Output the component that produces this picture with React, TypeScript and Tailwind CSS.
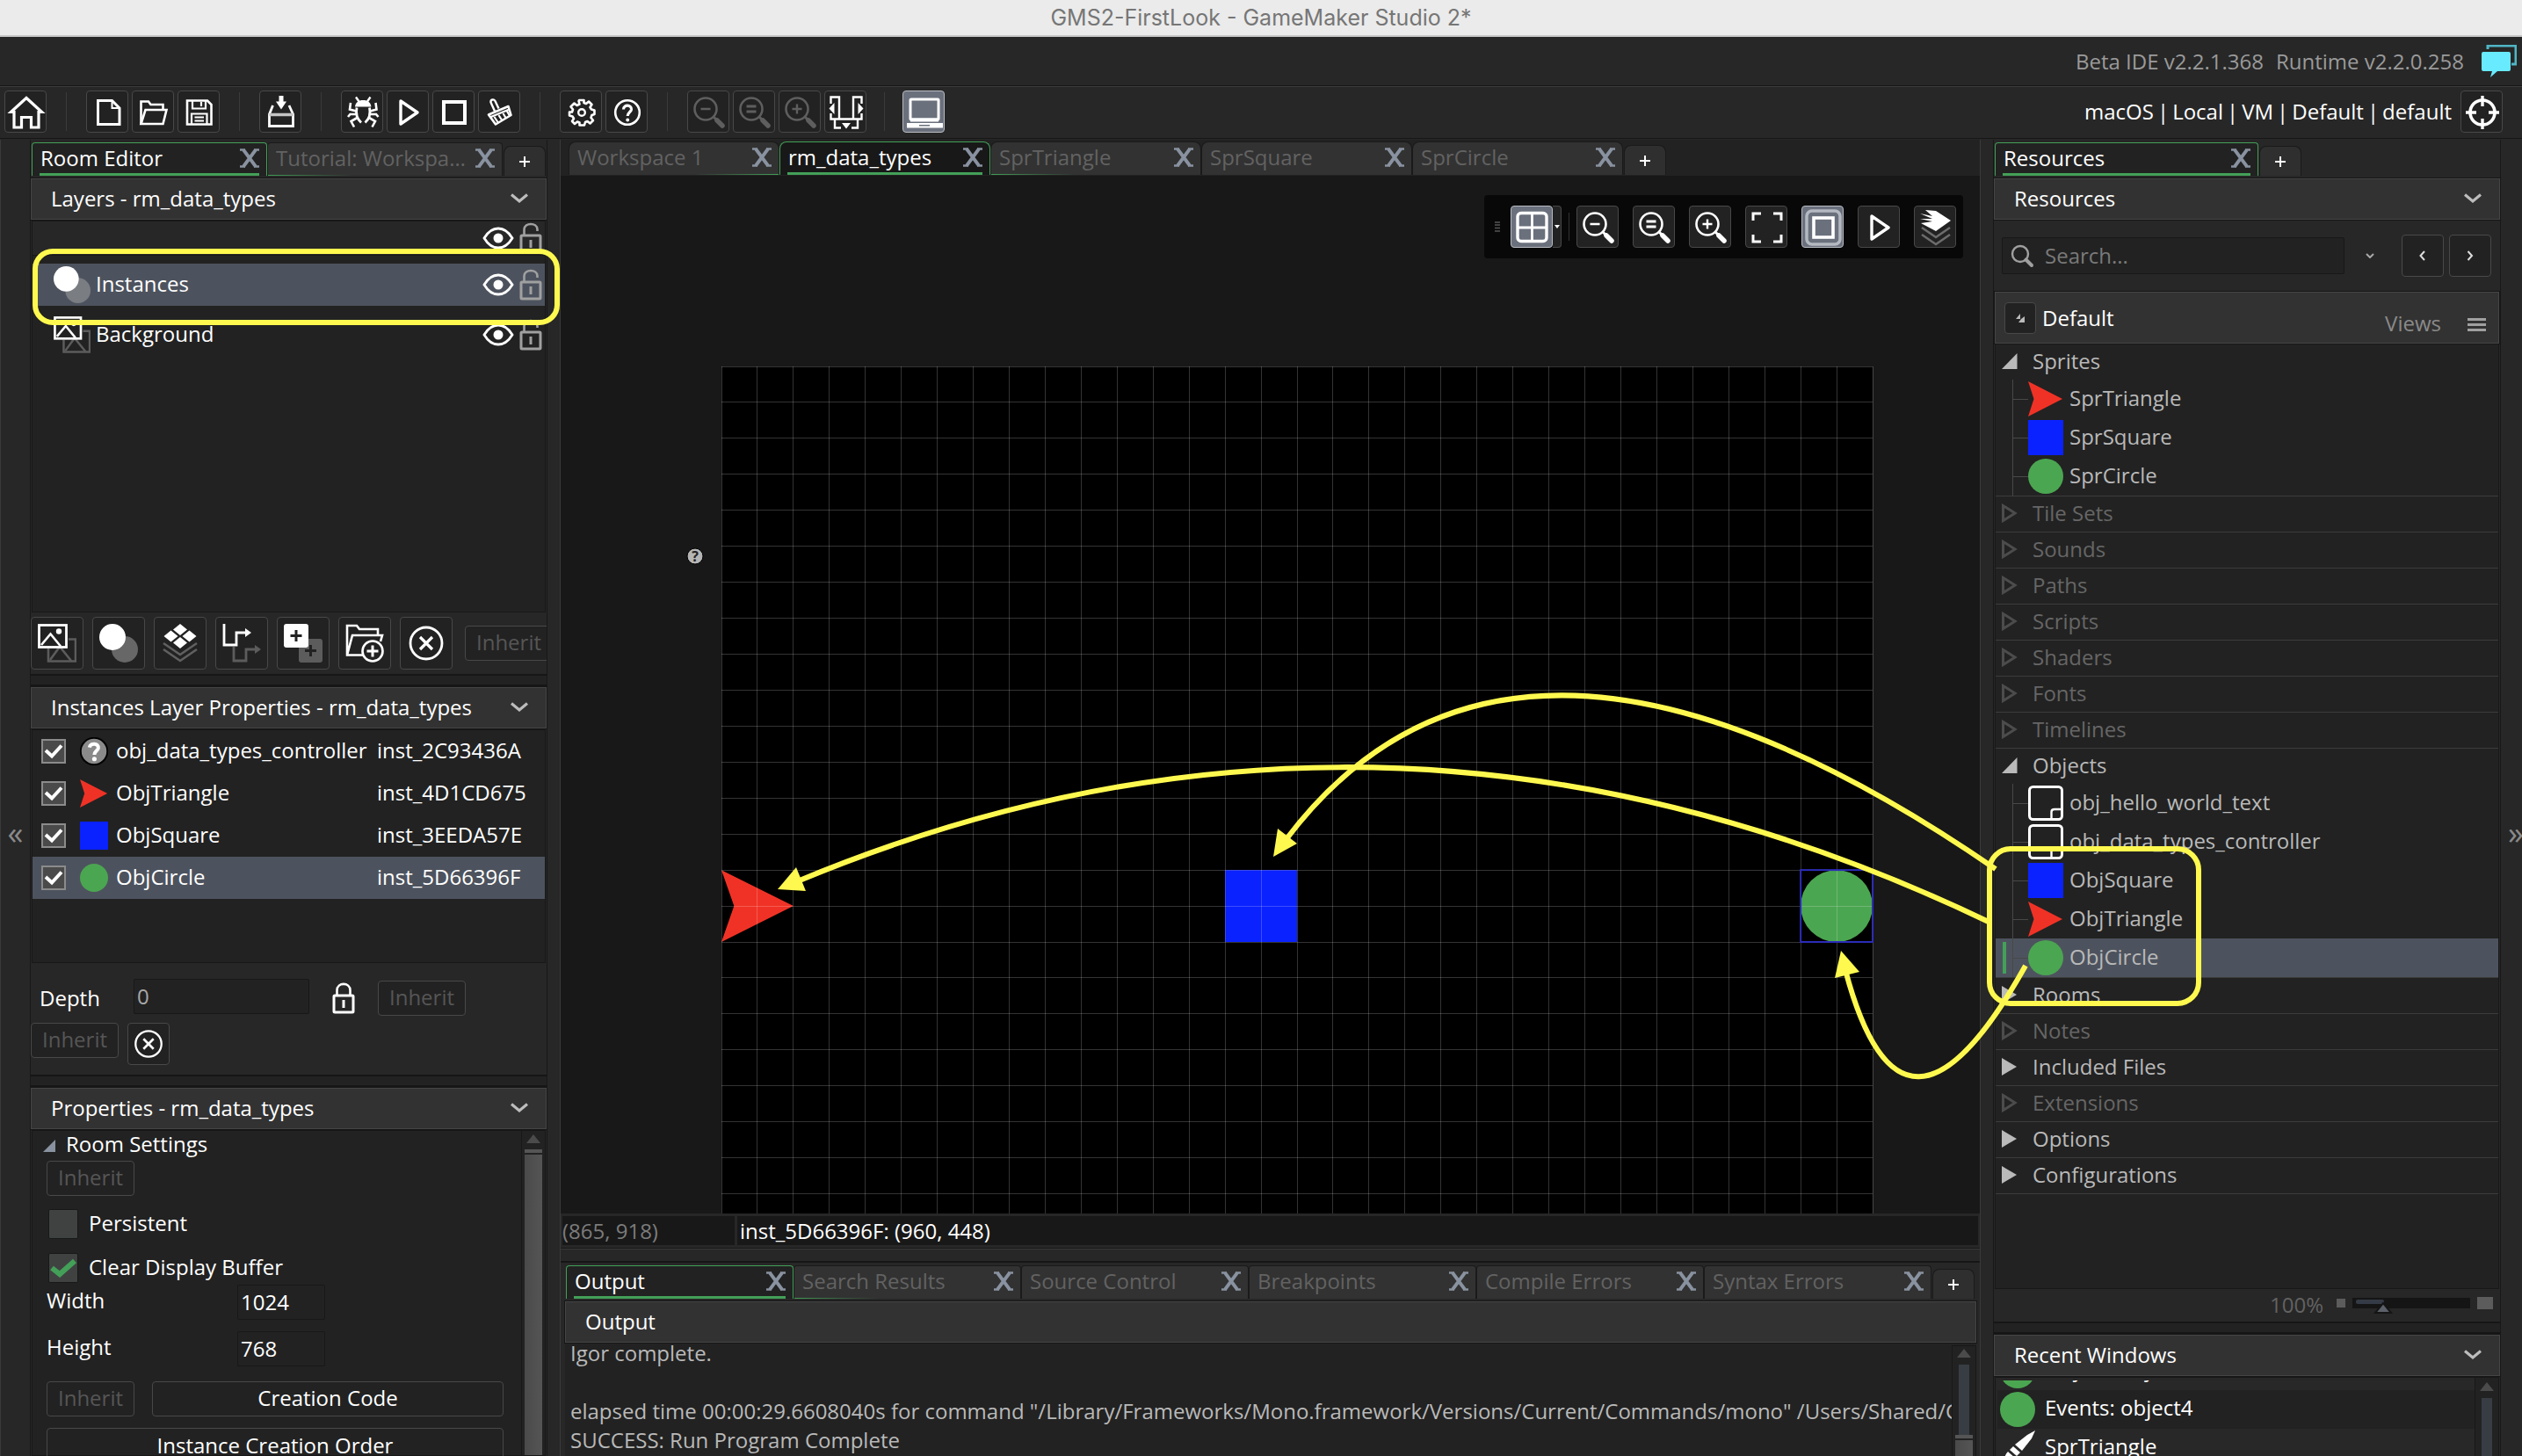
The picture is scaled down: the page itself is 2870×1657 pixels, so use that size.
import { useState } from "react";
import type { ReactNode } from "react";

const cx = (...c: (string | false | undefined)[]) => c.filter(Boolean).join(" ");

/* ---------- icons ---------- */

type SvgProps = { children: ReactNode; box?: number; className?: string };

function Svg({ children, box = 48, className = "size-12" }: SvgProps) {
  return (
    <svg
      viewBox={`0 0 ${box} ${box}`}
      className={cx("block shrink-0", className)}
      fill="none"
      stroke="currentColor"
      strokeWidth={3}
      aria-hidden="true"
    >
      {children}
    </svg>
  );
}

function Magnifier({ kind }: { kind: "out" | "reset" | "in" }) {
  return (
    <Svg>
      <circle cx="20" cy="20" r="12.5" strokeWidth="2.6" />
      <path d="M29 29l4 4" strokeWidth="3" />
      <path d="M33 33l6 6" strokeWidth="5.5" strokeLinecap="round" />
      {kind === "out" && <path d="M14.5 20h11" strokeWidth="2.6" />}
      {kind === "in" && <path d="M14.5 20h11M20 14.5v11" strokeWidth="2.4" />}
      {kind === "reset" && <path d="M14.5 17h11M14.5 23h11" strokeWidth="3" />}
    </Svg>
  );
}

const HomeIcon = () => (
  <Svg>
    <path d="M24 7.5L6.5 23.5H10V41H18.5V29.5H29.5V41H38V23.5H41.5Z" strokeWidth="3.2" />
  </Svg>
);
const NewIcon = () => (
  <Svg>
    <path d="M12.5 10.5H28.5L37 19V37.5H12.5Z" />
    <path d="M28.5 10.5V19H37" strokeWidth="2" />
  </Svg>
);
const OpenIcon = () => (
  <Svg>
    <path d="M9.5 37V11.5H18L20.5 15H34.5V20.5" strokeWidth="2.6" />
    <path d="M9.5 37L14.5 21H38.5L34.5 37Z" strokeWidth="2.6" />
  </Svg>
);
const SaveIcon = () => (
  <Svg>
    <path d="M10 10.5H33L37.5 15V37.5H10Z" strokeWidth="2.6" />
    <path d="M16 10.5V19.5H31V10.5M26 12V17M15 37V25.5H32.5V37M18.5 29.5H29M18.500 33.5H29" strokeWidth="2.2" />
  </Svg>
);
const BuildIcon = () => (
  <Svg>
    <path d="M14.5 16L10.500 26V39.5H37.5V26L33 16" strokeWidth="2.8" />
    <path d="M10.5 26.500H37.5" stroke="#c4c4c4" strokeWidth="3.5" />
    <path d="M24 5V14" strokeWidth="5" />
    <path d="M18 11.5H30L24 20.5Z" fill="currentColor" stroke="none" />
  </Svg>
);
const BugIcon = () => (
  <Svg>
    <path d="M15 17.5C15.500 12.500 19 10 24.200 10S33 12.500 33.400 17.5Z" fill="currentColor" stroke="none" />
    <path d="M19.500 11.500L16 6.500M29 11.500L32.500 6.500" strokeWidth="2.4" />
    <path d="M17 18.500C15.500 26 17 31 22 35.500M31.500 18.500C33 26 31.500 31 26.500 35.500" strokeWidth="2.8" />
    <path
      d="M10 13L9 20.500L16.500 22.500M38.500 13L39.500 20.500L32 22.500M16 26H9.500L7 29M32.500 26H39L41.500 29M17.500 30L10.500 34L14 40.500M31 30L38 34L34.500 40.500"
      strokeWidth="2.6"
    />
  </Svg>
);
const PlayIcon = () => (
  <Svg>
    <path d="M15 11L34 24L15 37Z" strokeWidth="3.4" strokeLinejoin="round" />
  </Svg>
);
const StopIcon = () => (
  <Svg>
    <rect x="12" y="12" width="24" height="24" strokeWidth="4" />
  </Svg>
);
const BroomIcon = () => (
  <Svg>
    <path d="M18 22.500L13.500 12.500C13 9 17 8.500 18.500 11L22.500 19.500" strokeWidth="2.4" />
    <path d="M11 26.500L33.500 17L36.500 27L19 37.500Z" strokeWidth="2.6" strokeLinejoin="round" />
    <path d="M12.500 29.500L34.500 20.500M17.500 29L21.500 35M22.500 27L26 32.500M27.500 25L30.500 30M32 22.500L34.500 27" strokeWidth="2.2" />
  </Svg>
);
const GearIcon = () => (
  <Svg>
    <path
      d="M20.5 11L21.5 14.5L18.5 16L15.5 13.5L11.5 17.5L14 20.5L13 23.5H10V27.5L13.5 28.5L15 31L13 34L16 37L19 34.5L21.5 35.5V38.5H27L28 35L30.5 34L33.5 36.5L37 33L34.5 30L35.5 27L38.5 26V21.5L35 20.5L33.5 18L35.5 15L32 11.5L29 14L26.5 13V10H21Z"
      strokeWidth="2.6"
      strokeLinejoin="round"
    />
    <circle cx="24" cy="24" r="3.8" strokeWidth="2.4" />
  </Svg>
);
const HelpIcon = () => (
  <Svg>
    <circle cx="24" cy="24" r="13.8" strokeWidth="2.6" />
    <path d="M19.5 20.5C19.5 14.5 29 15 28.5 20.5C28 23.5 24.2 24 24.2 28" strokeWidth="3.2" />
    <circle cx="24.2" cy="32.5" r="1.9" fill="currentColor" stroke="none" />
  </Svg>
);
const DockIcon = () => (
  <Svg>
    <path d="M16 31V6.5H6.5V14M6.5 25V31.500H41.5V25M41.5 14V6.5H32V31M11 32V41.500H18M37 32V41.500H30" strokeWidth="2.4" />
    <path d="M10.500 13L4.500 19.500L10.500 26ZM37.500 13L43.500 19.500L37.500 26ZM19 36H29L24 42.500Z" fill="currentColor" stroke="none" />
  </Svg>
);
const LaptopIcon = () => (
  <Svg>
    <rect x="8" y="9" width="32" height="23" rx="1" strokeWidth="3" />
    <path d="M8 32.5H40" strokeWidth="4" />
    <rect x="4" y="36" width="41" height="5.5" fill="currentColor" stroke="none" />
    <path d="M18 38.8H30" stroke="#6a707c" strokeWidth="1.6" />
  </Svg>
);
const TargetIcon = () => (
  <Svg>
    <circle cx="24" cy="24" r="14" strokeWidth="3.6" />
    <path d="M24 5V17M24 31V43M5 24H17M31 24H43" strokeWidth="3.4" />
  </Svg>
);
const GridIcon = () => (
  <Svg>
    <rect x="7" y="7.5" width="33" height="32" rx="4" strokeWidth="3.4" />
    <path d="M23.5 8V39M7 24H40" strokeWidth="2.8" />
  </Svg>
);
const FitIcon = () => (
  <Svg>
    <path d="M17 8H8V16M31 8H40V16M17 40H8V32M31 40H40V32" strokeWidth="3" />
  </Svg>
);
const FrameIcon = () => (
  <Svg>
    <rect x="5" y="5" width="38" height="38" rx="6" stroke="#b4b8c0" strokeWidth="3.5" />
    <rect x="13" y="13" width="22" height="22" strokeWidth="3.6" />
  </Svg>
);
const LayersIcon = () => (
  <Svg>
    <path d="M8 24L24 35L40 24M8 32L24 43L40 32" stroke="#6c6c6c" strokeWidth="2.6" />
    <path d="M24 5L41 16L24 28L7 19L20 17L6 14L20 14L6 8L20 11L12 4Z" fill="currentColor" stroke="none" />
  </Svg>
);

/* layer type icons on a 44 unit box */
const BackgroundLayer = ({ className = "size-11" }: { className?: string }) => (
  <Svg box={44} className={className}>
    <g stroke="#5c5c5c" strokeWidth="2.6">
      <path d="M12 28V42.5H43V17.5H35" />
      <path d="M14 41L25 26L38 42" />
    </g>
    <rect x="1.5" y="1.5" width="31" height="25" fill="#222" strokeWidth="2.8" />
    <path d="M4 24L14.5 11.5L26 25.5" strokeWidth="2.6" />
    <circle cx="24" cy="8.5" r="3.2" fill="currentColor" stroke="none" />
  </Svg>
);
const InstanceLayer = ({ className = "size-11" }: { className?: string }) => (
  <Svg box={44} className={className}>
    <circle cx="29" cy="29" r="15" fill="#a0a0a0" fillOpacity="0.55" stroke="none" />
    <circle cx="15" cy="15" r="15" fill="currentColor" stroke="none" />
  </Svg>
);
const TileLayer = () => (
  <Svg box={44} className="size-11">
    <path d="M3 22L22 35L41 22M3 29L22 42L41 29" stroke="#606060" strokeWidth="2.6" />
    <path d="M22 0l8 6.5-8 6.5-8-6.5zM11.5 7.5l8 6.5-8 6.5-8-6.5zM32.5 7.5l8 6.5-8 6.5-8-6.5zM22 15l8 6.5-8 6.5-8-6.5z" fill="currentColor" stroke="none" />
  </Svg>
);
const PathLayer = () => (
  <Svg box={44} className="size-11">
    <path d="M13 26V42H27V29H38" stroke="#5c5c5c" strokeWidth="2.8" />
    <path d="M37 24L44 29L37 34Z" fill="#5c5c5c" stroke="none" />
    <path d="M2 0V24H16V10H27" strokeWidth="2.8" />
    <path d="M26 5L33 10L26 15Z" fill="currentColor" stroke="none" />
  </Svg>
);
const AssetLayer = () => (
  <Svg box={44} className="size-11">
    <rect x="17" y="17" width="27" height="27" rx="3" fill="#5c5c5c" stroke="none" />
    <path d="M30.5 24V37M24 30.5H37" stroke="#222" />
    <rect x="0" y="0" width="28" height="27" rx="3" fill="currentColor" stroke="none" />
    <path d="M14 7V20M7.5 13.5H20.5" stroke="#222" />
  </Svg>
);
const FolderAdd = () => (
  <Svg box={44} className="size-11">
    <path d="M24 35.5H2V2H13L16 6H37V12M2 35.5L8 13H42L40 20" strokeWidth="2.6" />
    <circle cx="31" cy="31" r="11.5" fill="#222" strokeWidth="2.6" />
    <path d="M31 24.5V37.5M24.5 31H37.5" strokeWidth="3" />
  </Svg>
);
const CircleX = ({ className = "size-11" }: { className?: string }) => (
  <Svg box={44} className={className}>
    <circle cx="22" cy="22" r="18" strokeWidth="2.8" />
    <path d="M15 15L29 29M29 15L15 29" strokeWidth="3.2" />
  </Svg>
);

function Eye() {
  return (
    <svg viewBox="0 0 36 26" className="h-[26px] w-9 shrink-0" fill="none" aria-hidden="true">
      <path d="M2 13C8 3 14 2 18 2S28 3 34 13C28 23 22 24 18 24S8 23 2 13Z" stroke="#fff" strokeWidth="2.8" />
      <circle cx="18" cy="13" r="5.5" fill="#fff" />
    </svg>
  );
}
function Lock({ open, className }: { open?: boolean; className: string }) {
  return (
    <svg viewBox="0 0 26 36" className={cx("h-9 w-[26px] shrink-0", className)} fill="none" stroke="currentColor" aria-hidden="true">
      <rect x="2" y="15" width="22" height="19" rx="1" strokeWidth="3" />
      <path d={open ? "M5.5 15V8C5.5 0 20.5 0 20.5 8V10" : "M5.5 15V9C5.5 -0.5 20.5 -0.5 20.5 9V15"} strokeWidth="2.6" />
      <path d="M13 20V29" strokeWidth="3" />
    </svg>
  );
}
const Chevron = () => (
  <svg viewBox="0 0 20 12" className="h-3 w-5 shrink-0" fill="none" stroke="#bdbdbd" strokeWidth="3.2" aria-hidden="true">
    <path d="M1 1.5L10 9L19 1.5" />
  </svg>
);
const CloseGlyph = () => (
  <svg viewBox="0 0 24 22" className="h-[22px] w-6" fill="none" stroke="#8992a0" aria-hidden="true">
    <path d="M5 1.5L19 20.5M19 1.5L5 20.5" strokeWidth="3.8" />
    <path d="M1 1.5H7M17 1.5H23M1 20.5H7M17 20.5H23" strokeWidth="2.6" />
  </svg>
);

type ShapeName = "triangle" | "square" | "circle" | "object" | "help" | "brush";
function Shape({ name, className = "size-10" }: { name: ShapeName; className?: string }) {
  return (
    <svg viewBox="0 0 40 40" className={cx("block shrink-0", className)} aria-hidden="true">
      {name === "triangle" && <path d="M0 0L39 20L0 40L6.5 20Z" fill="#f03226" />}
      {name === "square" && <rect width="40" height="40" fill="#0a22ff" />}
      {name === "circle" && <circle cx="20" cy="20" r="20" fill="#4ba651" />}
      {name === "object" && (
        <g fill="none" stroke="#fff" strokeWidth="3">
          <rect x="1.5" y="1.5" width="37" height="37" rx="4" />
          <path d="M26.5 38V30C26.5 28 28 27 30 27H38" strokeWidth="2.4" />
        </g>
      )}
      {name === "help" && (
        <g>
          <circle cx="20" cy="20" r="19" fill="#8a8a8a" stroke="#000" strokeWidth="2.4" />
          <path d="M13.5 14.5C14.5 7.5 27 8 26 15.5C25.5 19 20.5 19.5 20.5 25" fill="none" stroke="#fff" strokeWidth="5" />
          <circle cx="20.5" cy="31" r="3.2" fill="#fff" />
        </g>
      )}
      {name === "brush" && (
        <g fill="#fff">
          <path d="M40 0L36 9L25 23L17 16L31 5Z" />
          <path d="M15 18L23 25L19 29L11 22Z" />
          <path d="M9 24L17 31C14 37 8 39 0 38C5 34 5 28 9 24Z" />
        </g>
      )}
    </svg>
  );
}

/* ---------- building blocks ---------- */

type IconButtonProps = { label: string; active?: boolean; dim?: boolean; children: ReactNode };
function IconButton({ label, active, dim, children }: IconButtonProps) {
  return (
    <button
      aria-label={label}
      className={cx(
        "grid size-12 shrink-0 place-items-center overflow-hidden rounded-sm border",
        active ? "border-[#b9bcc2] bg-[#6a707c]" : "border-[#484848] bg-[#222]",
        dim ? "text-[#5e5e5e]" : "text-white",
      )}
    >
      {children}
    </button>
  );
}

const Separator = () => <span className="mx-[22px] h-11 w-px shrink-0 bg-[#3a3a3a]" />;

type TabBarProps = {
  tabs: string[];
  active: string;
  label: string;
  tabClass: string;
  round?: string;
  activeBg: string;
};
function TabBar({ tabs, active, label, tabClass, round = "rounded-t", activeBg }: TabBarProps) {
  const at = tabs.indexOf(active);
  return (
    <div role="tablist" aria-label={label} className="flex items-end">
      {tabs.map((t, i) => {
        const on = i === at;
        return (
          <div
            key={t}
            className={cx(
              "relative flex h-[38px] shrink-0 items-center border-x border-t pr-[7px] pb-[3px] pl-[9px]",
              tabClass,
              round,
              on ? "border-[#43a058] text-white" : "border-[#1a1a1a] bg-[#323232] text-[#626262]",
              on && activeBg,
            )}
          >
            <button role="tab" aria-selected={on} className="min-w-0 flex-1 truncate text-left">
              {t}
            </button>
            <button aria-label={`Close ${t}`}>
              <CloseGlyph />
            </button>
            {on && <span className="absolute inset-x-2 bottom-0 h-[3px] bg-[#43a058]" />}
            {i === at + 1 && <span className="absolute bottom-0 left-0 h-px w-24 bg-linear-to-r from-[#43a058] to-transparent" />}
            {i === at - 1 && <span className="absolute right-0 bottom-0 h-px w-24 bg-linear-to-l from-[#43a058] to-transparent" />}
          </div>
        );
      })}
      <button
        aria-label={`Add tab to ${label}`}
        className="ml-px grid h-[34px] w-12 place-items-center rounded-t-lg border border-b-0 border-[#1a1a1a] bg-[#2f2f2f] text-white"
      >
        <svg viewBox="0 0 14 14" className="size-3.5" stroke="currentColor" strokeWidth="2" aria-hidden="true">
          <path d="M7 1V13M1 7H13" />
        </svg>
      </button>
    </div>
  );
}

function PanelHeader({ title, collapsible = true }: { title: string; collapsible?: boolean }) {
  return (
    <div className="mb-px flex h-[47px] shrink-0 items-center justify-between border border-[#454545] bg-[#323232] pr-5 pb-0.5 pl-[22px] text-white outline-1 outline-[#161616]">
      <h2>{title}</h2>
      {collapsible && (
        <button aria-label={`Collapse ${title}`}>
          <Chevron />
        </button>
      )}
    </div>
  );
}

const Splitter = () => <div className="mb-px h-3.5 shrink-0 border-y-2 border-[#161616] bg-[#222]" />;

function Inherit({ className }: { className?: string }) {
  return (
    <button disabled className={cx("h-10 w-[100px] shrink-0 rounded-sm border border-[#484848] bg-[#222] pb-0.5 text-[#565656]", className)}>
      Inherit
    </button>
  );
}

function ScrollArrow() {
  return (
    <svg viewBox="0 0 16 10" className="h-2.5 w-4 shrink-0" fill="#4b4b4b" aria-hidden="true">
      <path d="M8 0L16 10H0Z" />
    </svg>
  );
}

/* ---------- left column ---------- */

const layers = [
  { name: "", icon: null, selected: false },
  { name: "Instances", icon: <InstanceLayer className="size-[42px]" />, selected: true },
  { name: "Background", icon: <BackgroundLayer className="size-[42px]" />, selected: false },
];

const instances: { name: string; id: string; shape: ShapeName; selected?: boolean }[] = [
  { name: "obj_data_types_controller", id: "inst_2C93436A", shape: "help" },
  { name: "ObjTriangle", id: "inst_4D1CD675", shape: "triangle" },
  { name: "ObjSquare", id: "inst_3EEDA57E", shape: "square" },
  { name: "ObjCircle", id: "inst_5D66396F", shape: "circle", selected: true },
];

const layerButtons: { label: string; icon: ReactNode }[] = [
  { label: "New background layer", icon: <BackgroundLayer /> },
  { label: "New instance layer", icon: <InstanceLayer /> },
  { label: "New tile layer", icon: <TileLayer /> },
  { label: "New path layer", icon: <PathLayer /> },
  { label: "New asset layer", icon: <AssetLayer /> },
  { label: "New layer folder", icon: <FolderAdd /> },
  { label: "Delete layer", icon: <CircleX /> },
];

function SettingCheck({ label, initial }: { label: string; initial: boolean }) {
  const [on, setOn] = useState(initial);
  return (
    <label className="flex h-[50px] items-center gap-3">
      <span className="ml-0.5 grid size-[34px] place-items-center">
        <input
          type="checkbox"
          checked={on}
          onChange={() => setOn(!on)}
          className="col-start-1 row-start-1 size-[34px] appearance-none rounded-xs border border-[#181818] bg-[#404242]"
        />
        {on && (
          <svg viewBox="0 0 30 22" className="pointer-events-none col-start-1 row-start-1 h-[22px] w-[30px]" fill="none" stroke="#43a058" strokeWidth="6" aria-hidden="true">
            <path d="M2 11L11 18L28 3" />
          </svg>
        )}
      </span>
      <span className="pb-0.5">{label}</span>
    </label>
  );
}

function RoomEditor() {
  return (
    <aside className="flex w-[589px] shrink-0 flex-col overflow-hidden border-x border-[#181818] bg-[#272727] pt-[3px] text-white">
      <div className="mb-[3px] shrink-0 pl-px">
        <TabBar tabs={["Room Editor", "Tutorial: Workspaces"]} active="Room Editor" label="Room Editor" tabClass="w-[268px]" activeBg="bg-[#222]" />
      </div>
      <PanelHeader title="Layers - rm_data_types" />
      <ul className="mx-px flex h-[446px] shrink-0 flex-col gap-[9px] border border-[#181818] bg-[#222]">
        {layers.map((l) => (
          <li
            key={l.name}
            className={cx(
              "flex shrink-0 items-center gap-1.5 pr-[3px] pl-6",
              l.name === "" ? "h-[39px] border-b border-[#181818] bg-[#272727]" : "h-12",
              l.selected && "bg-[#4d535e]",
            )}
          >
            {l.icon}
            <span className="flex-1 pb-0.5">{l.name}</span>
            <button aria-label={`Toggle visibility ${l.name}`}>
              <Eye />
            </button>
            <button aria-label={`Toggle lock ${l.name}`}>
              <Lock open className="text-[#a0a0a0]" />
            </button>
          </li>
        ))}
      </ul>
      <div className="flex h-[70px] shrink-0 items-center gap-2.5 overflow-hidden">
        {layerButtons.map((b) => (
          <button key={b.label} aria-label={b.label} className="grid size-[60px] shrink-0 place-items-center rounded-sm border border-[#484848] bg-[#222] text-white">
            {b.icon}
          </button>
        ))}
        <Inherit className="ml-1" />
      </div>
      <Splitter />
      <PanelHeader title="Instances Layer Properties - rm_data_types" />
      <ul className="mx-px h-[266px] shrink-0 border border-[#181818] bg-[#222]">
        {instances.map((n) => (
          <li key={n.id} className={cx("grid h-12 grid-cols-[44px_41px_297px_1fr] items-center pl-2.5", n.selected && "bg-[#4d535e]")}>
            <span className="grid size-7 place-items-center">
              <input
                type="checkbox"
                defaultChecked
                aria-label={n.name}
                className="peer col-start-1 row-start-1 size-7 appearance-none border-2 border-[#8b8b8b] bg-[#4a4a4a]"
              />
              <svg viewBox="0 0 22 18" className="pointer-events-none col-start-1 row-start-1 hidden h-[18px] w-[22px] peer-checked:block" fill="none" stroke="#fff" strokeWidth="4" aria-hidden="true">
                <path d="M2 8L9 14.5L20 2.5" />
              </svg>
            </span>
            <Shape name={n.shape} className="size-8" />
            <span className="pb-0.5">{n.name}</span>
            <span className="pb-0.5">{n.id}</span>
          </li>
        ))}
      </ul>
      <div className="flex h-[68px] shrink-0 items-center pt-3 pl-2.5">
        <label htmlFor="depth" className="w-[107px]">
          Depth
        </label>
        <input id="depth" defaultValue="0" className="mb-1 h-10 w-[200px] rounded-xs border border-[#181818] bg-[#222] px-[3px] pb-0.5 text-[#a8a8a8]" />
        <button aria-label="Lock depth" className="ml-[26px]">
          <Lock className="text-white" />
        </button>
        <Inherit className="ml-[26px]" />
      </div>
      <div className="mb-[11px] flex h-12 shrink-0 items-start gap-2.5">
        <Inherit />
        <IconButton label="Clear">
          <CircleX className="size-9" />
        </IconButton>
      </div>
      <Splitter />
      <PanelHeader title="Properties - rm_data_types" />
      <div className="mx-px flex min-h-0 flex-1 border border-[#181818] bg-[#222]">
        <div className="flex min-w-0 flex-1 flex-col pr-5 pl-4">
          <h3 className="flex h-[34px] shrink-0 items-center gap-3 pb-1">
            <svg viewBox="0 0 14 14" className="mt-1 -ml-1 size-3.5" fill="#8992a0" aria-hidden="true">
              <path d="M14 0V14H0Z" />
            </svg>
            Room Settings
          </h3>
          <Inherit />
          <div className="mt-[7px] shrink-0">
            <SettingCheck label="Persistent" initial={false} />
            <SettingCheck label="Clear Display Buffer" initial />
          </div>
          <div className="-mt-1.5 mb-[17px] flex shrink-0 flex-col gap-[13px]">
            {[
              ["Width", "1024"],
              ["Height", "768"],
            ].map(([k, v]) => (
              <div key={k} className="flex h-10 items-center">
                <label htmlFor={k} className="w-[217px] pb-1">
                  {k}
                </label>
                <input id={k} defaultValue={v} className="h-10 w-[100px] rounded-xs border border-[#181818] bg-[#222] px-[3px] pb-0.5" />
              </div>
            ))}
          </div>
          <div className="flex shrink-0 gap-5">
            <Inherit />
            <button className="h-10 flex-1 rounded-sm border border-[#484848] pb-0.5">Creation Code</button>
          </div>
          <button className="mt-[13px] h-10 shrink-0 rounded-sm border border-[#484848]">Instance Creation Order</button>
        </div>
        <div className="flex w-[27px] flex-col items-center gap-[7px] border-l border-[#181818] pt-1">
          <ScrollArrow />
          <span className="flex w-5 flex-1 flex-col gap-0.5">
            <span className="h-1 bg-[#555]" />
            <span className="flex-1 bg-linear-to-r from-[#4a4a4a] to-[#555]" />
          </span>
        </div>
      </div>
    </aside>
  );
}

/* ---------- centre column ---------- */

const CELL = 41;

function RoomCanvas() {
  const left = 183;
  const top = 217;
  const width = CELL * 32 - 2;
  const step = width / 32;
  return (
    <svg className="block size-full" aria-label="Room view">
      <rect x={left} y={top} width={width} height="1000" fill="#000" />
      <svg x={left} y={top + step * 14} width={step * 2} height={step * 2} viewBox="0 0 40 40" preserveAspectRatio="none">
        <path d="M0 0L40 20L0 40L7 20Z" fill="#f03226" />
      </svg>
      <rect x={left + step * 14} y={top + step * 14} width={step * 2} height={step * 2} fill="#0a22ff" />
      <circle cx={left + step * 31} cy={top + step * 15} r={step} fill="#4ba651" />
      <g stroke="#fff" strokeOpacity="0.2" strokeWidth="1" shapeRendering="crispEdges">
        {Array.from({ length: 33 }, (_, i) => (
          <line key={`v${i}`} x1={left + i * step} x2={left + i * step} y1={top} y2="1200" />
        ))}
        {Array.from({ length: 24 }, (_, i) => (
          <line key={`h${i}`} x1={left} x2={left + width} y1={top + i * step} y2={top + i * step} />
        ))}
      </g>
      <rect x={left + step * 30} y={top + step * 14} width={step * 2} height={step * 2} fill="none" stroke="#2c2cb8" strokeWidth="2" />
      <circle cx="153" cy="433" r="9" fill="#b5b5b5" stroke="#000" strokeWidth="1" />
      <text x="153" y="439" textAnchor="middle" fill="#222" className="text-[16px] font-bold">
        ?
      </text>
    </svg>
  );
}

function CanvasToolbar() {
  return (
    <div className="absolute top-[22px] right-[19px] flex h-[72px] items-center gap-4 rounded-sm bg-[#080808] pr-2 pl-3">
      <svg viewBox="0 0 6 12" className="h-3 w-1.5" stroke="#555" strokeWidth="1.5" aria-hidden="true">
        <path d="M0 1H6M0 4H6M0 7.5H6M0 11H6" />
      </svg>
      <span className="-ml-1 flex items-center">
        <IconButton label="Toggle grid" active>
          <GridIcon />
        </IconButton>
        <button aria-label="Grid options" className="grid h-12 w-2.5 place-items-center rounded-r-sm border border-l-0 border-[#484848] bg-[#222]">
          <svg viewBox="0 0 6 4" className="h-1 w-1.5" fill="#fff" aria-hidden="true">
            <path d="M0 0H6L3 4Z" />
          </svg>
        </button>
        <span className="ml-2 h-8 w-px bg-[#333]" />
      </span>
      <span className="-ml-2 flex gap-4">
        <IconButton label="Zoom out"><Magnifier kind="out" /></IconButton>
        <IconButton label="Reset zoom"><Magnifier kind="reset" /></IconButton>
        <IconButton label="Zoom in"><Magnifier kind="in" /></IconButton>
        <IconButton label="Fit to view"><FitIcon /></IconButton>
        <IconButton label="Toggle frame" active><FrameIcon /></IconButton>
        <IconButton label="Play animation"><PlayIcon /></IconButton>
        <IconButton label="Layer display"><LayersIcon /></IconButton>
      </span>
    </div>
  );
}

function Workspace() {
  return (
    <main className="flex min-w-0 flex-1 flex-col border-x border-[#3a3a3a] bg-[#272727]">
      <div className="shrink-0 bg-[#222] pt-0.5 pb-px pl-[9px]">
        <TabBar
          tabs={["Workspace 1", "rm_data_types", "SprTriangle", "SprSquare", "SprCircle"]}
          active="rm_data_types"
          label="Workspaces"
          tabClass="w-[240px]"
          round="rounded-t-lg"
          activeBg="bg-[#181818]"
        />
      </div>
      <div className="relative min-h-0 flex-1 bg-[#181818]">
        <RoomCanvas />
        <CanvasToolbar />
      </div>
      <div className="flex h-10 shrink-0 gap-[3px] border-b border-[#161616] px-0.5 py-[3px]">
        <output className="flex w-[196px] items-center bg-[#181818] text-[#7c7c7c]">(865, 918)</output>
        <output className="flex flex-1 items-center bg-[#181818] pl-[3px] text-white">inst_5D66396F: (960, 448)</output>
      </div>
      <div className="h-3.5 shrink-0 border-t border-[#3a3a3a]" />
      <section className="flex h-[222px] shrink-0 flex-col border-t-2 border-[#161616] pr-1 pl-[5px]">
        <div className="mt-[3px] mb-[3px] shrink-0 pl-px">
          <TabBar
            tabs={["Output", "Search Results", "Source Control", "Breakpoints", "Compile Errors", "Syntax Errors"]}
            active="Output"
            label="Output"
            tabClass="w-[259px]"
            activeBg="bg-[#222]"
          />
        </div>
        <PanelHeader title="Output" collapsible={false} />
        <div className="flex min-h-0 flex-1 overflow-hidden bg-[#222]">
          <pre className="-mt-1.5 min-w-0 flex-1 overflow-hidden pl-1.5 [font-family:inherit] leading-[33px] text-[#b9b9b9]">
            {`Igor complete.\n\nelapsed time 00:00:29.6608040s for command "/Library/Frameworks/Mono.framework/Versions/Current/Commands/mono" /Users/Shared/GameMakerStudio2\nSUCCESS: Run Program Complete`}
          </pre>
          <div className="mt-0.5 flex w-7 flex-col items-center border border-b-0 border-[#181818] pt-[3px]">
            <ScrollArrow />
            <span className="mt-2 h-20 w-3 bg-[#383d44]" />
            <span className="h-1 w-5 bg-[#555]" />
            <span className="mt-0.5 w-5 flex-1 bg-linear-to-r from-[#4a4a4a] to-[#555]" />
          </div>
        </div>
      </section>
    </main>
  );
}

/* ---------- right column ---------- */

type Group = {
  name: string;
  state: "open" | "closed" | "empty";
  items?: { name: string; shape: ShapeName; selected?: boolean }[];
};
const tree: Group[] = [
  {
    name: "Sprites",
    state: "open",
    items: [
      { name: "SprTriangle", shape: "triangle" },
      { name: "SprSquare", shape: "square" },
      { name: "SprCircle", shape: "circle" },
    ],
  },
  { name: "Tile Sets", state: "empty" },
  { name: "Sounds", state: "empty" },
  { name: "Paths", state: "empty" },
  { name: "Scripts", state: "empty" },
  { name: "Shaders", state: "empty" },
  { name: "Fonts", state: "empty" },
  { name: "Timelines", state: "empty" },
  {
    name: "Objects",
    state: "open",
    items: [
      { name: "obj_hello_world_text", shape: "object" },
      { name: "obj_data_types_controller", shape: "object" },
      { name: "ObjSquare", shape: "square" },
      { name: "ObjTriangle", shape: "triangle" },
      { name: "ObjCircle", shape: "circle", selected: true },
    ],
  },
  { name: "Rooms", state: "closed" },
  { name: "Notes", state: "empty" },
  { name: "Included Files", state: "closed" },
  { name: "Extensions", state: "empty" },
  { name: "Options", state: "closed" },
  { name: "Configurations", state: "closed" },
];

function TreeArrow({ state }: { state: Group["state"] }) {
  return (
    <svg viewBox="0 0 18 22" className="h-[22px] w-[18px] shrink-0" aria-hidden="true">
      {state === "open" && <path d="M17.5 2V20H0Z" fill="#bababa" />}
      {state === "closed" && <path d="M0 1L17 11L0 21Z" fill="#bababa" />}
      {state === "empty" && <path d="M1.5 2.5L15 11L1.5 19.5Z" fill="none" stroke="#4c4c4c" strokeWidth="3" />}
    </svg>
  );
}

function ResourceTree() {
  return (
    <ul className="mx-px h-[1076px] shrink-0 border border-[#181818] bg-[#222] text-[#b9b9b9]">
      {tree.map((g) => (
        <li key={g.name} className="border-b border-[#3c3c3c]">
          <button className="flex h-10 w-full items-center gap-[17px] pb-0.5 pl-[7px] text-left">
            <TreeArrow state={g.state} />
            <span className={g.state === "empty" ? "text-[#666]" : undefined}>{g.name}</span>
          </button>
          {g.items && (
            <ul>
              {g.items.map((it) => (
                <li key={it.name} className={cx("flex h-11 items-center", it.selected && "bg-[#4d535e]")}>
                  <span className="flex w-[19px] justify-center">{it.selected && <span className="h-9 w-1 bg-[#43a058]" />}</span>
                  <span className="flex h-11 w-[18px] items-center border-l border-[#484848]">
                    <span className="h-px w-full bg-[#484848]" />
                  </span>
                  <Shape name={it.shape} />
                  <button className="ml-[7px] pb-0.5">{it.name}</button>
                </li>
              ))}
            </ul>
          )}
        </li>
      ))}
    </ul>
  );
}

const recent: { name: string; shape: ShapeName }[] = [
  { name: "Object: object4", shape: "circle" },
  { name: "Events: object4", shape: "circle" },
  { name: "SprTriangle", shape: "brush" },
];

function Resources() {
  return (
    <aside className="flex w-[578px] shrink-0 flex-col overflow-hidden border-x border-[#181818] bg-[#272727] pt-[3px]">
      <div className="mb-[3px] shrink-0 pl-px text-white">
        <TabBar tabs={["Resources"]} active="Resources" label="Resources" tabClass="w-[300px]" activeBg="bg-[#222]" />
      </div>
      <PanelHeader title="Resources" />
      <div className="flex h-20 shrink-0 items-center pr-2.5 pl-[9px]">
        <div className="flex h-[42px] w-[390px] items-center gap-3 rounded-xs border border-[#181818] bg-[#222] pl-2">
          <svg viewBox="0 0 28 28" className="size-7" fill="none" stroke="#a0a0a0" aria-hidden="true">
            <circle cx="12" cy="12" r="9" strokeWidth="2.4" />
            <path d="M18.5 18.5L25 25" strokeWidth="4" strokeLinecap="round" />
          </svg>
          <input aria-label="Search resources" placeholder="Search..." className="min-w-0 flex-1 bg-transparent placeholder:text-[#7a7a7a]" />
        </div>
        <button aria-label="Search options" className="ml-6">
          <svg viewBox="0 0 10 6" className="h-1.5 w-2.5" fill="none" stroke="#a8a8a8" strokeWidth="2" aria-hidden="true">
            <path d="M1 1L5 5L9 1" />
          </svg>
        </button>
        <div className="ml-auto flex gap-1.5">
          {["Previous", "Next"].map((l) => (
            <IconButton key={l} label={l}>
              <svg viewBox="0 0 8 12" className="h-3 w-2" fill="none" stroke="#ddd" strokeWidth="2" aria-hidden="true">
                <path d={l === "Next" ? "M1.5 1L6 6L1.5 11" : "M6 1L1.5 6L6 11"} />
              </svg>
            </IconButton>
          ))}
        </div>
      </div>
      <div className="mx-px mt-px flex h-[59px] shrink-0 items-center border border-[#454545] bg-[#323232] pr-3.5 pl-2.5 outline-1 outline-[#161616]">
        <button aria-label="Collapse default view" className="grid size-9 place-items-center rounded-sm border border-[#484848] bg-[#222]">
          <svg viewBox="0 0 10 12" className="h-3 w-2.5" fill="#bababa" aria-hidden="true">
            <path d="M5 1V7H0ZM10 4V11H3L6 7Z" />
          </svg>
        </button>
        <span className="ml-[7px] flex-1 text-white">Default</span>
        <button className="mt-3 flex items-center gap-[30px] text-[#8a8a8a]">
          Views
          <span className="mt-1 flex w-[21px] flex-col gap-[3px]">
            <span className="h-[3px] bg-[#a0a0a0]" />
            <span className="h-[3px] bg-[#a0a0a0]" />
            <span className="h-[3px] bg-[#a0a0a0]" />
          </span>
        </button>
      </div>
      <ResourceTree />
      <div className="flex h-[37px] shrink-0 items-center justify-end gap-2 pr-2 pb-0.5 text-[#626262]">
        <label htmlFor="zoom">100%</label>
        <span className="mb-1 ml-[7px] size-2.5 bg-[#5c5c5c]" />
        <span className="grid h-5 w-[134px] items-center">
          <svg viewBox="0 0 134 20" className="col-start-1 row-start-1 h-5 w-[134px]" aria-hidden="true">
            <rect y="2" width="134" height="12" fill="#151515" />
            <rect x="4" y="4" width="32" height="5" rx="2" fill="#353b46" />
            <path d="M35 8L44 19H26Z" fill="#5c6068" stroke="#151515" strokeWidth="2" />
          </svg>
          <input id="zoom" type="range" defaultValue={25} className="col-start-1 row-start-1 m-0 w-full opacity-0" />
        </span>
        <span className="mb-1 h-3.5 w-[18px] bg-[#5c5c5c]" />
      </div>
      <Splitter />
      <PanelHeader title="Recent Windows" />
      <div className="mx-px flex min-h-0 flex-1 border border-b-0 border-[#181818] text-white">
        <div className="mt-[3px] flex-1 overflow-hidden pl-0.5">
          <ul className="-mt-[33px]">
            {recent.map((r, i) => (
              <li key={r.name} className={cx("flex h-11 items-center gap-[11px] pl-[3px]", i % 2 ? "bg-[#222]" : "bg-[#282828]")}>
                <Shape name={r.shape} />
                <span className="pb-1">{r.name}</span>
              </li>
            ))}
          </ul>
        </div>
        <div className="flex w-[27px] flex-col items-center gap-2 border-l border-[#181818] bg-[#222] pt-[5px]">
          <ScrollArrow />
          <span className="w-3 flex-1 bg-[#383d44]" />
        </div>
      </div>
    </aside>
  );
}

/* ---------- annotations drawn over the editor ---------- */

function Annotations() {
  return (
    <svg viewBox="0 0 2870 1657" className="pointer-events-none absolute inset-0 size-full" aria-hidden="true">
      <g fill="none" stroke="#fff94f" strokeWidth="6">
        <rect x="40" y="286" width="594" height="81" rx="20" />
        <rect x="2264" y="966" width="238" height="176" rx="24" />
        <path d="M2271 989Q1723 611 1463 956" />
        <path d="M2265 1050Q1581 721 905 1004" />
        <path d="M2305 1099Q2165 1349 2100 1104" />
      </g>
      <g fill="#fff94f">
        <path d="M1449 975L1454 943L1476 960Z" />
        <path d="M885 1012L906 987L917 1014Z" />
        <path d="M2095 1082L2088 1113L2116 1106Z" />
      </g>
    </svg>
  );
}

/* ---------- page ---------- */

const DockHandle = ({ children }: { children: string }) => (
  <button aria-label="Toggle dock" className="text-[36px] text-[#8a8a8a]">
    {children}
  </button>
);

const target = ["macOS", "Local", "VM", "Default", "default"];

export default function App() {
  return (
    <div className="relative flex h-screen w-full flex-col overflow-hidden bg-[#272727] font-['Open_Sans','Noto_Sans',sans-serif] text-[24px] leading-8">
      <header className="flex h-[42px] shrink-0 items-center justify-center border-b-2 border-[#c8c8c8] bg-[#ebebeb] font-['Inter',sans-serif] text-[25px] text-[#767676]">
        <h1>GMS2-FirstLook - GameMaker Studio 2*</h1>
      </header>
      <div className="flex h-14 shrink-0 items-center justify-end border-b border-[#161616] pr-1.5 text-[#9a9a9a]">
        <span className="mr-3.5">Beta IDE v2.2.1.368</span>
        <span>Runtime v2.2.0.258</span>
        <button aria-label="Messages" className="ml-5">
          <svg viewBox="0 0 40 38" className="h-[38px] w-10" aria-hidden="true">
            <path d="M7 5V1H39V22H34" fill="none" stroke="#4fb6c6" strokeWidth="3" />
            <path d="M2 8H31Q33 8 33 10V28Q33 30 31 30H18L10 37L12 30H2Q0 30 0 28V10Q0 8 2 8Z" fill="#68eaff" />
          </svg>
        </button>
      </div>
      <div className="flex h-[60px] shrink-0 items-center border-t border-b border-t-[#3c3c3c] border-b-[#161616] pr-[22px] pb-0.5 pl-[5px]">
        <IconButton label="Home"><HomeIcon /></IconButton>
        <Separator />
        <div className="flex gap-1">
          <IconButton label="New"><NewIcon /></IconButton>
          <IconButton label="Open"><OpenIcon /></IconButton>
          <IconButton label="Save"><SaveIcon /></IconButton>
        </div>
        <Separator />
        <IconButton label="Create executable"><BuildIcon /></IconButton>
        <Separator />
        <div className="flex gap-1">
          <IconButton label="Debug"><BugIcon /></IconButton>
          <IconButton label="Run"><PlayIcon /></IconButton>
          <IconButton label="Stop"><StopIcon /></IconButton>
          <IconButton label="Clean"><BroomIcon /></IconButton>
        </div>
        <Separator />
        <div className="flex gap-1">
          <IconButton label="Game options"><GearIcon /></IconButton>
          <IconButton label="Help"><HelpIcon /></IconButton>
        </div>
        <Separator />
        <div className="flex gap-1">
          <IconButton label="Zoom out" dim><Magnifier kind="out" /></IconButton>
          <IconButton label="Reset zoom" dim><Magnifier kind="reset" /></IconButton>
          <IconButton label="Zoom in" dim><Magnifier kind="in" /></IconButton>
          <IconButton label="Toggle docks"><DockIcon /></IconButton>
        </div>
        <span className="mx-5 h-11 w-px bg-[#3a3a3a]" />
        <IconButton label="Laptop mode" active><LaptopIcon /></IconButton>
        <button className="mr-2.5 ml-auto flex gap-1 text-white">
          {target.map((t, i) => (
            <span key={t} className="flex gap-1">
              {i > 0 && <span>|</span>}
              <span>{t}</span>
            </span>
          ))}
        </button>
        <IconButton label="Target manager"><TargetIcon /></IconButton>
      </div>
      <div className="mt-px flex min-h-0 flex-1">
        <div className="grid w-[34px] shrink-0 place-items-center border-l border-[#3a3a3a] pt-20">
          <DockHandle>«</DockHandle>
        </div>
        <RoomEditor />
        <div className="w-3.5 shrink-0 bg-[#272727]" />
        <Workspace />
        <div className="w-3.5 shrink-0 bg-[#272727]" />
        <Resources />
        <div className="grid w-6 shrink-0 items-center justify-start overflow-hidden pt-20 pl-2">
          <DockHandle>»</DockHandle>
        </div>
      </div>
      <Annotations />
    </div>
  );
}
